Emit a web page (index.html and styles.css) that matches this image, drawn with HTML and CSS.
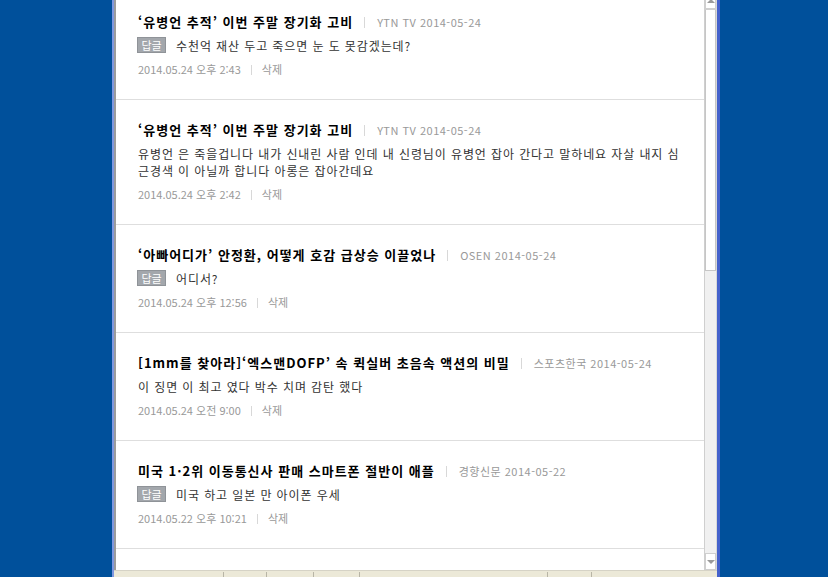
FILE: index.html
```html
<!DOCTYPE html>
<html lang="ko">
<head>
  <meta charset="UTF-8">
  <title>내 댓글</title>
  <link rel="stylesheet" href="styles.css">
</head>
<body>

  <div class="window">
    <div class="main">
      <ul class="comment-list">
        <li class="comment">
          <div class="title">‘유병언 추적’ 이번 주말 장기화 고비<span class="bar"></span><span class="source">YTN TV 2014-05-24</span></div>
          <p class="body"><span class="badge">답글</span>수천억 재산 두고 죽으면 눈 도 못감겠는데?</p>
          <div class="meta">2014.05.24 오후 2:43<span class="bar"></span><a class="del">삭제</a></div>
        </li>
        <li class="comment">
          <div class="title">‘유병언 추적’ 이번 주말 장기화 고비<span class="bar"></span><span class="source">YTN TV 2014-05-24</span></div>
          <p class="body">유병언 은 죽을겁니다 내가 신내린 사람 인데 내 신령님이 유병언 잡아 간다고 말하네요 자살 내지 심근경색 이 아닐까 합니다 아롱은 잡아간데요</p>
          <div class="meta">2014.05.24 오후 2:42<span class="bar"></span><a class="del">삭제</a></div>
        </li>
        <li class="comment">
          <div class="title">‘아빠어디가’ 안정환, 어떻게 호감 급상승 이끌었나<span class="bar"></span><span class="source">OSEN 2014-05-24</span></div>
          <p class="body"><span class="badge">답글</span>어디서?</p>
          <div class="meta">2014.05.24 오후 12:56<span class="bar"></span><a class="del">삭제</a></div>
        </li>
        <li class="comment">
          <div class="title">[1mm를 찾아라]‘엑스맨DOFP’ 속 퀵실버 초음속 액션의 비밀<span class="bar"></span><span class="source">스포츠한국 2014-05-24</span></div>
          <p class="body">이 징면 이 최고 였다 박수 치며 감탄 했다</p>
          <div class="meta">2014.05.24 오전 9:00<span class="bar"></span><a class="del">삭제</a></div>
        </li>
        <li class="comment">
          <div class="title">미국 1·2위 이동통신사 판매 스마트폰 절반이 애플<span class="bar"></span><span class="source">경향신문 2014-05-22</span></div>
          <p class="body"><span class="badge">답글</span>미국 하고 일본 만 아이폰 우세</p>
          <div class="meta">2014.05.22 오후 10:21<span class="bar"></span><a class="del">삭제</a></div>
        </li>
      </ul>

      <div class="scrollbar">
        <div class="sb-btn up"><span class="arrow"></span></div>
        <div class="sb-thumb"></div>
        <div class="sb-track"></div>
        <div class="sb-btn down"><span class="arrow"></span></div>
      </div>
    </div>

    <div class="statusbar">
      <span class="pane" style="width: 107px"></span>
      <span class="pane" style="width: 42px"></span>
      <span class="pane" style="width: 46px"></span>
      <span class="pane" style="width: 45px"></span>
      <span class="pane" style="width: 187px"></span>
      <span class="pane" style="width: 43px"></span>
    </div>
  </div>

</body>
</html>
```

FILE: styles.css
```css
body {
  margin: 0;
  height: 577px;
  overflow: hidden;
  background: #00509b;
  font-family: "Noto Sans CJK KR", "Liberation Sans", sans-serif;
  color: #333;
}

.window {
  margin: -8px 0 0 112px;
  width: 603px;
  display: flex;
  flex-direction: column;
  border-left: 2px solid #7f98e0;
  border-right: 3px solid #4562cc;
}

.main {
  display: flex;
  height: 578px;
  border-left: 2px solid #9c9c9c;
  background: #fff;
}

/* comment list */
.comment-list {
  list-style: none;
  margin: 0;
  padding: 0;
  flex-grow: 1;
  overflow: hidden;
}

.comment {
  padding: 20px 20px 22px 22px;
  border-bottom: 1px solid #dedede;
}

.title {
  font-size: 13px;
  font-weight: bold;
  line-height: 20px;
  letter-spacing: 1px;
  color: #000;
  white-space: nowrap;
}

.bar {
  display: inline-block;
  width: 1px;
  height: 11px;
  background: #d8d8d8;
  margin: 0 12px;
  vertical-align: -1px;
}

.title .bar {
  margin: 0 12px 0 11px;
}

.source {
  font-size: 11px;
  font-weight: normal;
  letter-spacing: 0.5px;
  color: #999;
}

.body {
  margin: 5px 0 0;
  font-size: 12px;
  line-height: 17px;
  letter-spacing: 0.9px;
  color: #333;
}

.badge {
  display: inline-block;
  width: 27px;
  height: 14px;
  line-height: 14px;
  margin: 0 10px 0 -1px;
  background: #a3a7ac;
  border: 1px solid #8f9398;
  color: #fff;
  font-size: 11px;
  text-align: center;
  letter-spacing: 0;
  vertical-align: top;
}

.meta {
  margin-top: 7px;
  font-size: 11px;
  line-height: 16px;
  color: #999;
}

.meta .bar {
  margin: 0 10px;
  height: 10px;
  vertical-align: -1px;
}

.del {
  color: #999;
  cursor: pointer;
}

/* scrollbar */
.scrollbar {
  width: 15px;
  display: flex;
  flex-direction: column;
  border-left: 1px solid #cfcfcf;
  border-right: 1px solid #d8d8d8;
  background: #f0f0f0;
}

.sb-btn {
  height: 15px;
  background: #fff;
  border: 1px solid #cfcfcf;
  display: flex;
  align-items: center;
  justify-content: center;
}

.sb-btn.up {
  border-bottom-width: 2px;
}

.arrow {
  width: 0;
  height: 0;
  border-left: 4px solid transparent;
  border-right: 4px solid transparent;
}

.up .arrow {
  border-bottom: 4px solid #9a9a9a;
}

.down .arrow {
  border-top: 4px solid #9a9a9a;
}

.sb-thumb {
  height: 260px;
  background: #fff;
  border: 1px solid #c6c6c6;
  border-top: none;
}

.sb-track {
  flex-grow: 1;
}

/* status bar */
.statusbar {
  height: 12px;
  background: #ece9d8;
  border-top: 1px solid #d6d3c6;
  display: flex;
  padding-left: 2px;
}

.pane {
  height: 5px;
  border-right: 1px solid #b8b5a6;
  margin-top: 1px;
}
```
